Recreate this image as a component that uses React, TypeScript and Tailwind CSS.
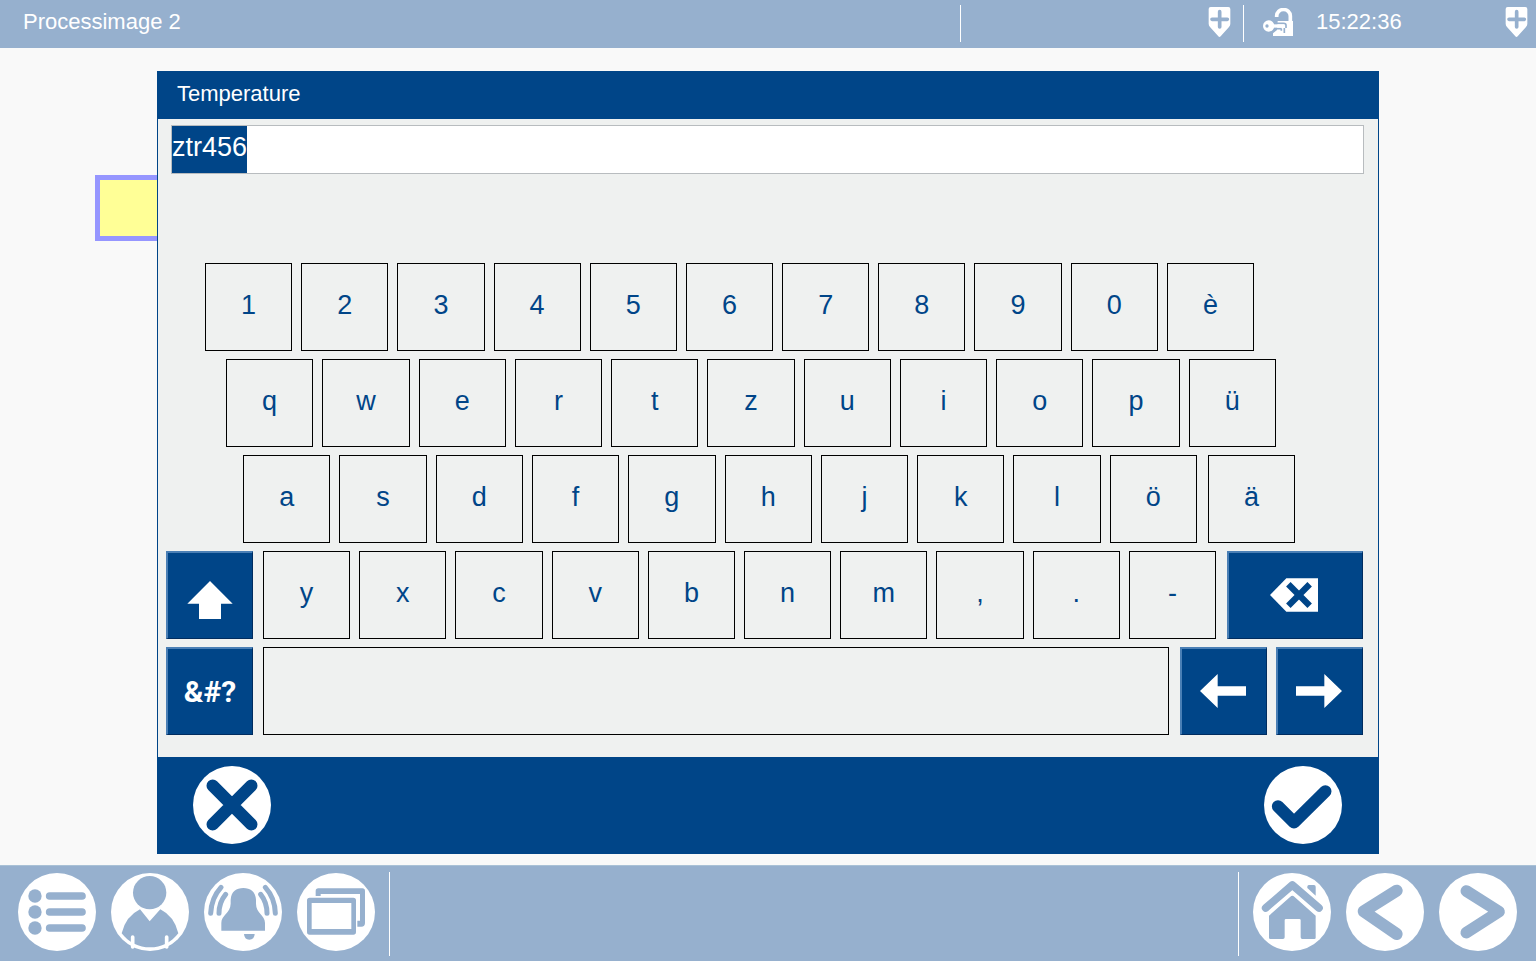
import { useEffect, useRef, useState } from 'react';
import type { ReactNode } from 'react';

const numberRow = ['1', '2', '3', '4', '5', '6', '7', '8', '9', '0', 'è'];
const topRow = ['q', 'w', 'e', 'r', 't', 'z', 'u', 'i', 'o', 'p', 'ü'];
const homeRow = ['a', 's', 'd', 'f', 'g', 'h', 'j', 'k', 'l', 'ö'];
const bottomRow = ['y', 'x', 'c', 'v', 'b', 'n', 'm', ',', '.', '-'];

type KeyProps = {
  label: string;
  onPress: (value: string) => void;
};

function Key({ label, onPress }: KeyProps) {
  return (
    <button
      type="button"
      onClick={() => onPress(label)}
      className="h-[88px] w-full border border-black pb-1 text-[27px] leading-8 text-[#004588] active:bg-white"
    >
      {label}
    </button>
  );
}

type ActionKeyProps = {
  label: string;
  onClick: () => void;
  className: string;
  children: ReactNode;
};

function ActionKey({ label, onClick, className, children }: ActionKeyProps) {
  return (
    <button
      type="button"
      aria-label={label}
      onClick={onClick}
      className={`flex h-[88px] shrink-0 items-center justify-center border-t-2 border-r border-b border-l-2 border-t-[#4a7fb5] border-r-[#002c5f] border-b-[#002c5f] border-l-[#4a7fb5] bg-[#004588] text-white ${className}`}
    >
      {children}
    </button>
  );
}

type RoundButtonProps = {
  label: string;
  onClick?: () => void;
  color: string;
  children: ReactNode;
};

function RoundButton({ label, onClick, color, children }: RoundButtonProps) {
  return (
    <button type="button" aria-label={label} onClick={onClick} className={`size-[78px] shrink-0 rounded-full bg-white ${color}`}>
      <svg viewBox="0 0 234 234" className="size-full" fill="currentColor">
        {children}
      </svg>
    </button>
  );
}

function ShieldPlus() {
  return (
    <svg viewBox="0 0 69 90" className="h-[30px] w-[23px]">
      <path d="M8 0H61Q67 0 67 6V50Q67 55 63 60L38 88Q34 92 31 88L6 60Q2 55 2 50V6Q2 0 8 0Z" fill="white" />
      <path d="M12 37H58M35 14V60" stroke="#96b0ce" strokeWidth="11" strokeLinecap="round" />
    </svg>
  );
}

function UnlockKey() {
  return (
    <svg viewBox="0 0 90 84" className="h-7 w-[30px]" fill="none">
      <path d="M41 27V24A20 19 0 0 1 82 24V42" stroke="white" strokeWidth="11" />
      <path d="M44 39H90V84H30V76L42 66Z" fill="white" />
      <path d="M34 46H62Q69 46 69 52V60M36 62H56M64 60V75M55 62V68" stroke="#96b0ce" strokeWidth="5" />
      <circle cx="17" cy="54" r="17" fill="white" />
      <circle cx="12" cy="54" r="5" fill="#96b0ce" />
      <path d="M30 54H64" stroke="white" strokeWidth="10" />
    </svg>
  );
}

export default function App() {
  const [value, setValue] = useState('ztr456');
  const [allSelected, setAllSelected] = useState(true);
  const [shift, setShift] = useState(false);
  const inputRef = useRef<HTMLInputElement>(null);

  useEffect(() => {
    inputRef.current?.focus();
    inputRef.current?.select();
  }, []);

  const changeValue = (next: string) => {
    setValue(next);
    setAllSelected(false);
  };

  const press = (key: string) => {
    const input = inputRef.current;
    const start = input?.selectionStart ?? value.length;
    const end = input?.selectionEnd ?? value.length;
    changeValue(value.slice(0, start) + key + value.slice(end));
  };

  const moveCaret = (step: number) => {
    const input = inputRef.current;
    if (!input) return;
    const position = Math.max(0, (input.selectionStart ?? 0) + step);
    input.focus();
    input.setSelectionRange(position, position);
    setAllSelected(false);
  };

  const renderKeys = (keys: string[]) =>
    keys.map((key) => <Key key={key} label={shift ? key.toUpperCase() : key} onPress={press} />);

  return (
    <div className="flex min-h-screen flex-col bg-[#f9f9f9] font-['Liberation_Sans',Arial,sans-serif]">
      <header className="flex h-12 bg-[#96b0ce] text-[22px] leading-7 text-white">
        <h1 className="flex-1 pt-2 pl-[23px]">Processimage 2</h1>
        <div className="mt-[5px] flex h-[37px] w-[283px] items-start justify-end border-l border-white pt-0.5 pr-3">
          <ShieldPlus />
        </div>
        <div className="mt-[5px] flex h-[37px] w-[293px] items-start border-l border-white pt-0.5 pr-2 pl-[19px]">
          <div className="pt-px">
            <UnlockKey />
          </div>
          <time className="ml-[23px] flex-1 pt-px">15:22:36</time>
          <ShieldPlus />
        </div>
      </header>

      <main className="relative flex-1 pt-[23px] pb-[11px]">
        <div className="absolute top-[127px] left-[95px] h-[66px] w-[200px] border-[5px] border-[#9696ff] bg-[#ffff96]" />

        <section aria-label="Temperature" className="relative mx-auto w-full max-w-[1222px] bg-[#004588]">
          <h2 className="h-12 pt-[9px] pl-5 text-[22px] leading-7 text-white">Temperature</h2>

          <div className="mx-px bg-[#eff1f0] pt-1.5 pb-[22px]">
            <div className="pr-3.5 pl-[13px]">
              <div className="relative h-[49px] border border-[#b8bcbf] bg-white">
                {/* the native selection is only as tall as the font, this fills the field */}
                {allSelected ? <span className="absolute inset-y-0 left-0 w-[75px] bg-[#004588]" /> : null}
                <input
                  ref={inputRef}
                  type="text"
                  aria-label="Temperature"
                  value={value}
                  onChange={(e) => changeValue(e.target.value)}
                  onMouseDown={() => setAllSelected(false)}
                  className="relative block h-full w-full bg-transparent pb-[5px] text-[27px] text-[#004588] outline-none selection:bg-[#004588] selection:text-white"
                />
              </div>
            </div>

            <div className="mt-[89px] flex flex-col gap-2">
              <div className="grid grid-cols-11 gap-[9px] pr-[124px] pl-[47px]">{renderKeys(numberRow)}</div>
              <div className="grid grid-cols-11 gap-[9px] pr-[102px] pl-[68px]">{renderKeys(topRow)}</div>
              <div className="flex gap-[11px] pr-[83px] pl-[85px]">
                <div className="grid flex-1 grid-cols-10 gap-[9px]">{renderKeys(homeRow)}</div>
                <div className="w-[87px]">{renderKeys(['ä'])}</div>
              </div>
              <div className="flex pr-[15px] pl-2">
                <ActionKey label="Shift" onClick={() => setShift(!shift)} className="w-[87px] pt-2">
                  <svg viewBox="0 0 136 114" className="h-[38px] w-[46px]" fill="currentColor">
                    <path d="M68 0L136 68H101V114H35V68H0Z" />
                  </svg>
                </ActionKey>
                <div className="mr-[11px] ml-2.5 grid flex-1 grid-cols-10 gap-[9px]">{renderKeys(bottomRow)}</div>
                <ActionKey label="Backspace" onClick={() => changeValue(value.slice(0, -1))} className="w-[136px] pr-1 pb-0.5">
                  <svg viewBox="0 0 144 100" className="h-[34px] w-12">
                    <path d="M0 50L49 0H144V100H49Z" fill="currentColor" />
                    <path d="M55 18L119 82M119 18L55 82" stroke="#004588" strokeWidth="19" />
                  </svg>
                </ActionKey>
              </div>
              <div className="flex pr-[15px] pl-2">
                <ActionKey label="Symbols" onClick={() => setShift(false)} className="w-[87px]">
                  <span className="font-[Roboto,sans-serif] text-[30px] leading-9 font-bold">&amp;#?</span>
                </ActionKey>
                <button
                  type="button"
                  aria-label="Space"
                  onClick={() => press(' ')}
                  className="mr-[11px] ml-2.5 h-[88px] flex-1 border border-black active:bg-white"
                />
                <div className="flex gap-[9px]">
                  <ActionKey label="Cursor left" onClick={() => moveCaret(-1)} className="w-[87px] pr-0.5 pb-0.5">
                    <svg viewBox="0 0 138 102" className="h-[34px] w-[46px]" fill="currentColor">
                      <path d="M0 51L53 0V37H138V65H53V102Z" />
                    </svg>
                  </ActionKey>
                  <ActionKey label="Cursor right" onClick={() => moveCaret(1)} className="w-[87px] pr-0.5 pb-0.5">
                    <svg viewBox="0 0 138 102" className="h-[34px] w-[46px]" fill="currentColor">
                      <path d="M138 51L85 0V37H0V65H85V102Z" />
                    </svg>
                  </ActionKey>
                </div>
              </div>
            </div>
          </div>

          <div className="flex h-[97px] items-start justify-between pt-[9px] pr-[37px] pl-9">
            <RoundButton label="Cancel" color="text-[#004588]" onClick={() => changeValue('ztr456')}>
              <path d="M59 59L175 175M175 59L59 175" stroke="currentColor" strokeWidth="37" strokeLinecap="round" />
            </RoundButton>
            <RoundButton label="Confirm" color="text-[#004588]">
              <path
                d="M42 121L90 169L184 76"
                fill="none"
                stroke="currentColor"
                strokeWidth="37"
                strokeLinecap="round"
                strokeLinejoin="round"
              />
            </RoundButton>
          </div>
        </section>
      </main>

      <footer className="flex h-24 justify-between border-t border-[#a9c1d6] bg-[#96b0ce]">
        <nav aria-label="System" className="mt-1.5 flex h-[84px] w-[390px] gap-[15px] border-r border-white pt-px pl-[18px]">
          <RoundButton label="Menu" color="text-[#96b0ce]">
            <circle cx="51" cy="69" r="20" />
            <circle cx="51" cy="117" r="20" />
            <circle cx="51" cy="165" r="20" />
            <path d="M95 69H192M95 117H192M95 165H192" stroke="currentColor" strokeWidth="23" strokeLinecap="round" />
          </RoundButton>
          <RoundButton label="User" color="text-[#96b0ce]">
            <circle cx="116" cy="59" r="50" />
            <path d="M87 109L116 145L148 109Q190 130 202 181A107 107 0 0 1 32 181Q44 130 87 109Z" />
            <path d="M65 192V222M167 192V222" stroke="white" strokeWidth="11" strokeLinecap="round" />
          </RoundButton>
          <RoundButton label="Alarms" color="text-[#96b0ce]">
            <path d="M80 80C82 55 97 45 118 45C139 45 154 55 156 80V92C156 122 183 125 183 150V173H52V150C52 125 79 122 80 92Z" />
            <path d="M120 183H152Q151 200 136 200Q121 200 120 183Z" />
            <path
              d="M51 43Q22 75 20 121M65 64Q45 88 45 121M170 64Q189 88 189 121M184 43Q213 75 214 121"
              fill="none"
              stroke="currentColor"
              strokeWidth="15"
              strokeLinecap="round"
            />
          </RoundButton>
          <RoundButton label="Windows" color="text-[#96b0ce]">
            <path d="M56 69V54Q56 46 64 46H196Q204 46 204 54V150Q204 161 193 161H181V143H189V63H71V69Z" />
            <path d="M38 74H169Q177 74 177 82V177Q177 185 169 185H38Q30 185 30 177V82Q30 74 38 74ZM44 90V168H163V90Z" fillRule="evenodd" />
          </RoundButton>
        </nav>

        <nav aria-label="Navigation" className="mt-1.5 flex h-[84px] w-[298px] gap-[15px] border-l border-white pt-px pl-3.5">
          <RoundButton label="Home" color="text-[#96b0ce]">
            <path
              d="M38 105L118 36L198 105"
              fill="none"
              stroke="currentColor"
              strokeWidth="23"
              strokeLinecap="round"
              strokeLinejoin="round"
            />
            <path d="M168 36H183Q188 36 188 41V68L163 45Q162 36 168 36Z" />
            <path d="M112 71Q118 66 124 71L188 128V194Q188 198 184 198H148Q143 198 143 193V142Q143 138 139 138H99Q95 138 95 142V193Q95 198 90 198H52Q48 198 48 194V128Z" />
          </RoundButton>
          <RoundButton label="Back" color="text-[#96b0ce]">
            <path
              d="M152 53L53 115L152 183"
              fill="none"
              stroke="currentColor"
              strokeWidth="36"
              strokeLinecap="round"
              strokeLinejoin="round"
            />
          </RoundButton>
          <RoundButton label="Forward" color="text-[#96b0ce]">
            <path
              d="M82 54L180 116L82 179"
              fill="none"
              stroke="currentColor"
              strokeWidth="35"
              strokeLinecap="round"
              strokeLinejoin="round"
            />
          </RoundButton>
        </nav>
      </footer>
    </div>
  );
}
